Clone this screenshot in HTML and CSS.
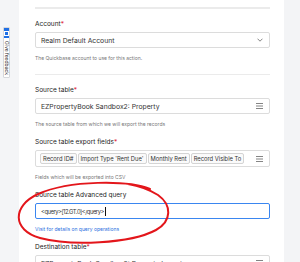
FILE: index.html
```html
<!DOCTYPE html>
<html lang="en">
<head>
    <meta charset="UTF-8">
    <meta name="viewport" content="width=device-width, initial-scale=1.0">
    <title>Export Records</title>
    <link rel="stylesheet" href="styles.css">
</head>
<body>

    <!-- Left rail with feedback tab -->
    <div class="rail">
        <div class="feedback">
            <div class="feedback-icon">
                <svg width="5" height="5" viewBox="0 0 5 5"><rect x="0.5" y="0.5" width="4" height="4" fill="none" stroke="#fff" stroke-width="1"/></svg>
            </div>
            <div class="feedback-text">Give feedback</div>
        </div>
    </div>

    <!-- Action settings form -->
    <div class="main">
        <div class="divider top"></div>

        <div class="field">
            <div class="label">Account<span class="req">*</span></div>
            <div class="box select">
                <span class="value">Realm Default Account</span>
                <svg class="chevron" width="6" height="4" viewBox="0 0 6 4"><path d="M0.5 0.7 L3 3.2 L5.5 0.7" fill="none" stroke="#777" stroke-width="0.9"/></svg>
            </div>
            <div class="help">The Quickbase account to use for this action.</div>
        </div>

        <div class="divider"></div>

        <div class="field">
            <div class="label">Source table<span class="req">*</span></div>
            <div class="box select">
                <span class="value">EZPropertyBook Sandbox2: Property</span>
                <svg class="menu" width="7" height="6" viewBox="0 0 7 6"><path d="M0 0.5 H7 M0 3 H7 M0 5.5 H7" stroke="#777" stroke-width="0.9"/></svg>
            </div>
            <div class="help">The source table from which we will export the records</div>
        </div>

        <div class="field">
            <div class="label">Source table export fields<span class="req">*</span></div>
            <div class="box multi">
                <div class="chips">
                    <span class="chip">Record ID#</span>
                    <span class="chip">Import Type 'Rent Due'</span>
                    <span class="chip">Monthly Rent</span>
                    <span class="chip">Record Visible To</span>
                </div>
                <svg class="menu" width="7" height="6" viewBox="0 0 7 6"><path d="M0 0.5 H7 M0 3 H7 M0 5.5 H7" stroke="#777" stroke-width="0.9"/></svg>
            </div>
            <div class="help">Fields which will be exported into CSV</div>
        </div>

        <div class="field">
            <div class="label">Source table Advanced query</div>
            <div class="box input focused">
                <span class="value">&lt;query&gt;[12.GT.0]&lt;/query&gt;</span><span class="caret"></span>
            </div>
            <div class="help link">Visit for details on query operations</div>
        </div>

        <div class="field">
            <div class="label">Destination table<span class="req">*</span></div>
            <div class="box select">
                <span class="value">EZPropertyBook Sandbox2: Property Imports</span>
                <svg class="menu" width="7" height="6" viewBox="0 0 7 6"><path d="M0 0.5 H7 M0 3 H7 M0 5.5 H7" stroke="#777" stroke-width="0.9"/></svg>
            </div>
        </div>
    </div>

    <div class="aside"></div>

    <!-- Hand-drawn annotation over the query field -->
    <svg class="annotation" width="300" height="262" viewBox="0 0 300 262">
        <path d="M150 189 C128 180 70 180 38 194 C12 206 12 230 40 238 C70 246 130 244 156 230 C172 221 172 205 158 195 C150 190 140 186 128 184"
              fill="none" stroke="#e3161b" stroke-width="2" stroke-linecap="round"/>
    </svg>

</body>
</html>
```

FILE: styles.css
```css
body {
    margin: 0;
    height: 262px;
    overflow: hidden;
    display: flex;
    font-family: 'Inter', 'Liberation Sans', sans-serif;
    background-color: #fff;
    color: #222;
}

.rail {
    width: 19px;
    flex-shrink: 0;
    background-color: #f4f5f7;
}

.feedback {
    width: 7px;
    margin: 27px 0 0 3px;
    border: 1px solid #d6d8dc;
    border-radius: 1px;
    background-color: #fff;
    box-sizing: border-box;
}

.feedback-icon {
    height: 10px;
    background-color: #1f6fe5;
    display: flex;
    align-items: center;
    justify-content: center;
}

.feedback-text {
    writing-mode: vertical-rl;
    font-size: 5px;
    line-height: 5px;
    padding: 3px 0 2px;
    color: #333;
    white-space: nowrap;
}

.main {
    flex: 1;
    padding: 0 14px 0 16px;
    background-color: #fff;
}

.aside {
    width: 16px;
    flex-shrink: 0;
    background-color: #f3f4f6;
}

.divider {
    height: 1px;
    background-color: #ebebeb;
    margin: 12px 0 10px;
}

.divider.top {
    height: 2px;
    margin: 7px 0 10px;
}

.field {
    margin-bottom: 9px;
}

.label {
    font-size: 6.5px;
    line-height: 10px;
    margin-bottom: 3px;
    color: #222;
}

.req {
    color: #e0263a;
}

.box {
    height: 16px;
    border: 1px solid #dcdcdc;
    border-radius: 2px;
    box-sizing: border-box;
    display: flex;
    align-items: center;
    padding: 0 6px 0 5px;
    font-size: 6.8px;
    color: #333;
}

.box .value {
    flex: 1;
    white-space: nowrap;
    overflow: hidden;
}

.box.input .value {
    flex: 0 0 auto;
    font-size: 5.8px;
    letter-spacing: -0.45px;
}

.box.multi {
    height: 17px;
    padding-left: 4px;
}

.box.focused {
    border: 1px solid #3a86f0;
}

.caret {
    width: 1px;
    height: 9px;
    margin-left: 1px;
    background-color: #111;
}

.chips {
    flex: 1;
    display: flex;
    gap: 1px;
}

.chip {
    font-size: 5.8px;
    line-height: 9px;
    padding: 0 2px;
    border: 1px solid #d4d4d4;
    border-radius: 2px;
    background-color: #fafafa;
    white-space: nowrap;
}

.help {
    font-size: 5px;
    line-height: 8px;
    margin-top: 6px;
    color: #777;
}

.help.link {
    color: #2a6fe0;
}

.annotation {
    position: absolute;
    left: 0;
    top: 0;
    pointer-events: none;
}
```
